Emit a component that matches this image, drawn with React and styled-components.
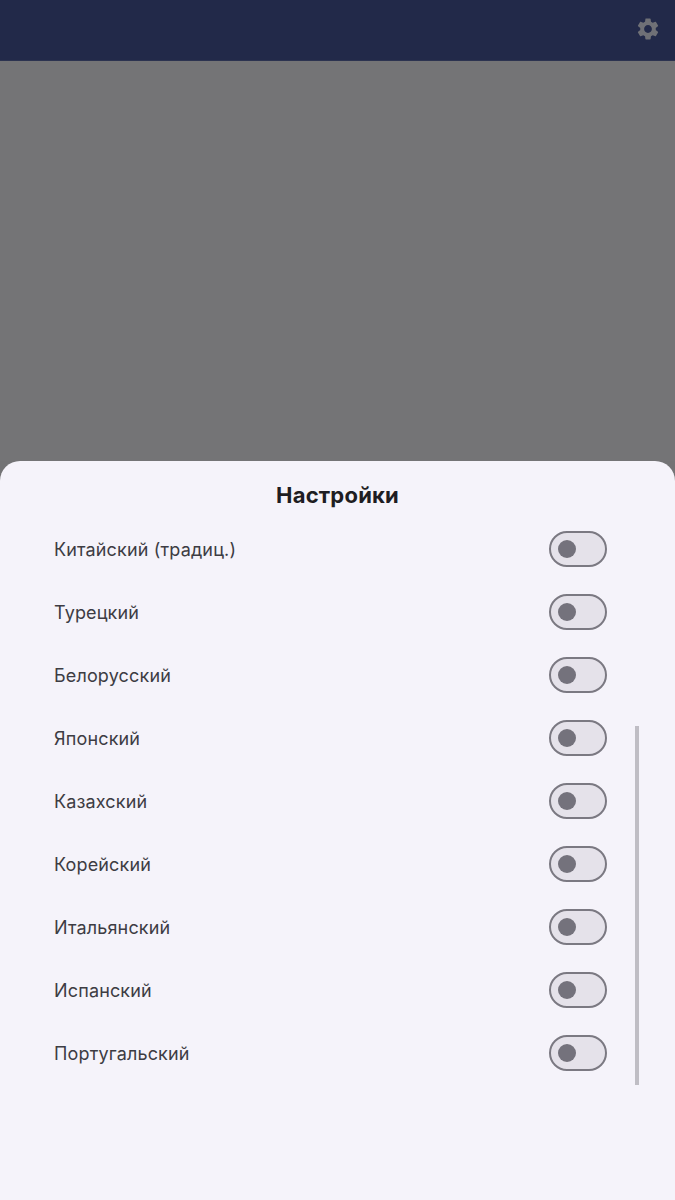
import React from 'react';
import styled, { createGlobalStyle } from 'styled-components';
import { MdSettings } from 'react-icons/md';

const languages = [
  'Китайский (традиц.)',
  'Турецкий',
  'Белорусский',
  'Японский',
  'Казахский',
  'Корейский',
  'Итальянский',
  'Испанский',
  'Португальский',
];

const GlobalStyle = createGlobalStyle`
  html, body {
    margin: 0;
    padding: 0;
    background: #737375;
  }
  * {
    box-sizing: border-box;
  }
`;

const Page = styled.div`
  width: 675px;
  height: 1200px;
  display: flex;
  flex-direction: column;
  overflow: hidden;
  background: #737375;
  font-family: Inter, "Noto Sans", sans-serif;
`;

const TopBar = styled.header`
  height: 61px;
  flex: none;
  display: flex;
  justify-content: flex-end;
  align-items: flex-start;
  padding: 16px 14px 0 0;
  background: #222949;
  color: #6f7076;
  font-size: 26px;
  border-bottom: 1px solid #2c3350;
`;

const Backdrop = styled.div`
  flex: 1;
  background: #747476;
`;

const Sheet = styled.section`
  position: relative;
  height: 739px;
  flex: none;
  padding-top: 20px;
  background: #f5f3fa;
  border-radius: 20px 20px 0 0;
`;

const Title = styled.h2`
  margin: 0 0 7px;
  text-align: center;
  font-size: 22px;
  line-height: 29px;
  font-weight: 700;
  letter-spacing: 0.2px;
  color: #1e1d22;
`;

const List = styled.ul`
  margin: 0;
  padding: 0 68px 0 54px;
  list-style: none;
`;

const Row = styled.li`
  height: 63px;
  display: flex;
  align-items: center;
  justify-content: space-between;
`;

const Label = styled.span`
  padding-top: 2px;
  font-size: 18px;
  letter-spacing: 0.15px;
  color: #3d3c43;
`;

const Switch = styled.span`
  width: 58px;
  height: 36px;
  display: flex;
  align-items: center;
  padding-left: 7px;
  background: #e5e2ea;
  border: 2.5px solid #7b7982;
  border-radius: 18px;
`;

const Thumb = styled.span`
  width: 18px;
  height: 18px;
  border-radius: 50%;
  background: #74727c;
`;

const Scrollbar = styled.div`
  position: absolute;
  top: 265px;
  right: 36px;
  width: 4px;
  height: 359px;
  background: #bfbdc4;
`;

export default function App() {
  return (
    <Page>
      <GlobalStyle />
      <TopBar>
        <MdSettings />
      </TopBar>
      <Backdrop />
      <Sheet>
        <Title>Настройки</Title>
        <List>
          {languages.map((name) => (
            <Row key={name}>
              <Label>{name}</Label>
              <Switch>
                <Thumb />
              </Switch>
            </Row>
          ))}
        </List>
        <Scrollbar />
      </Sheet>
    </Page>
  );
}
